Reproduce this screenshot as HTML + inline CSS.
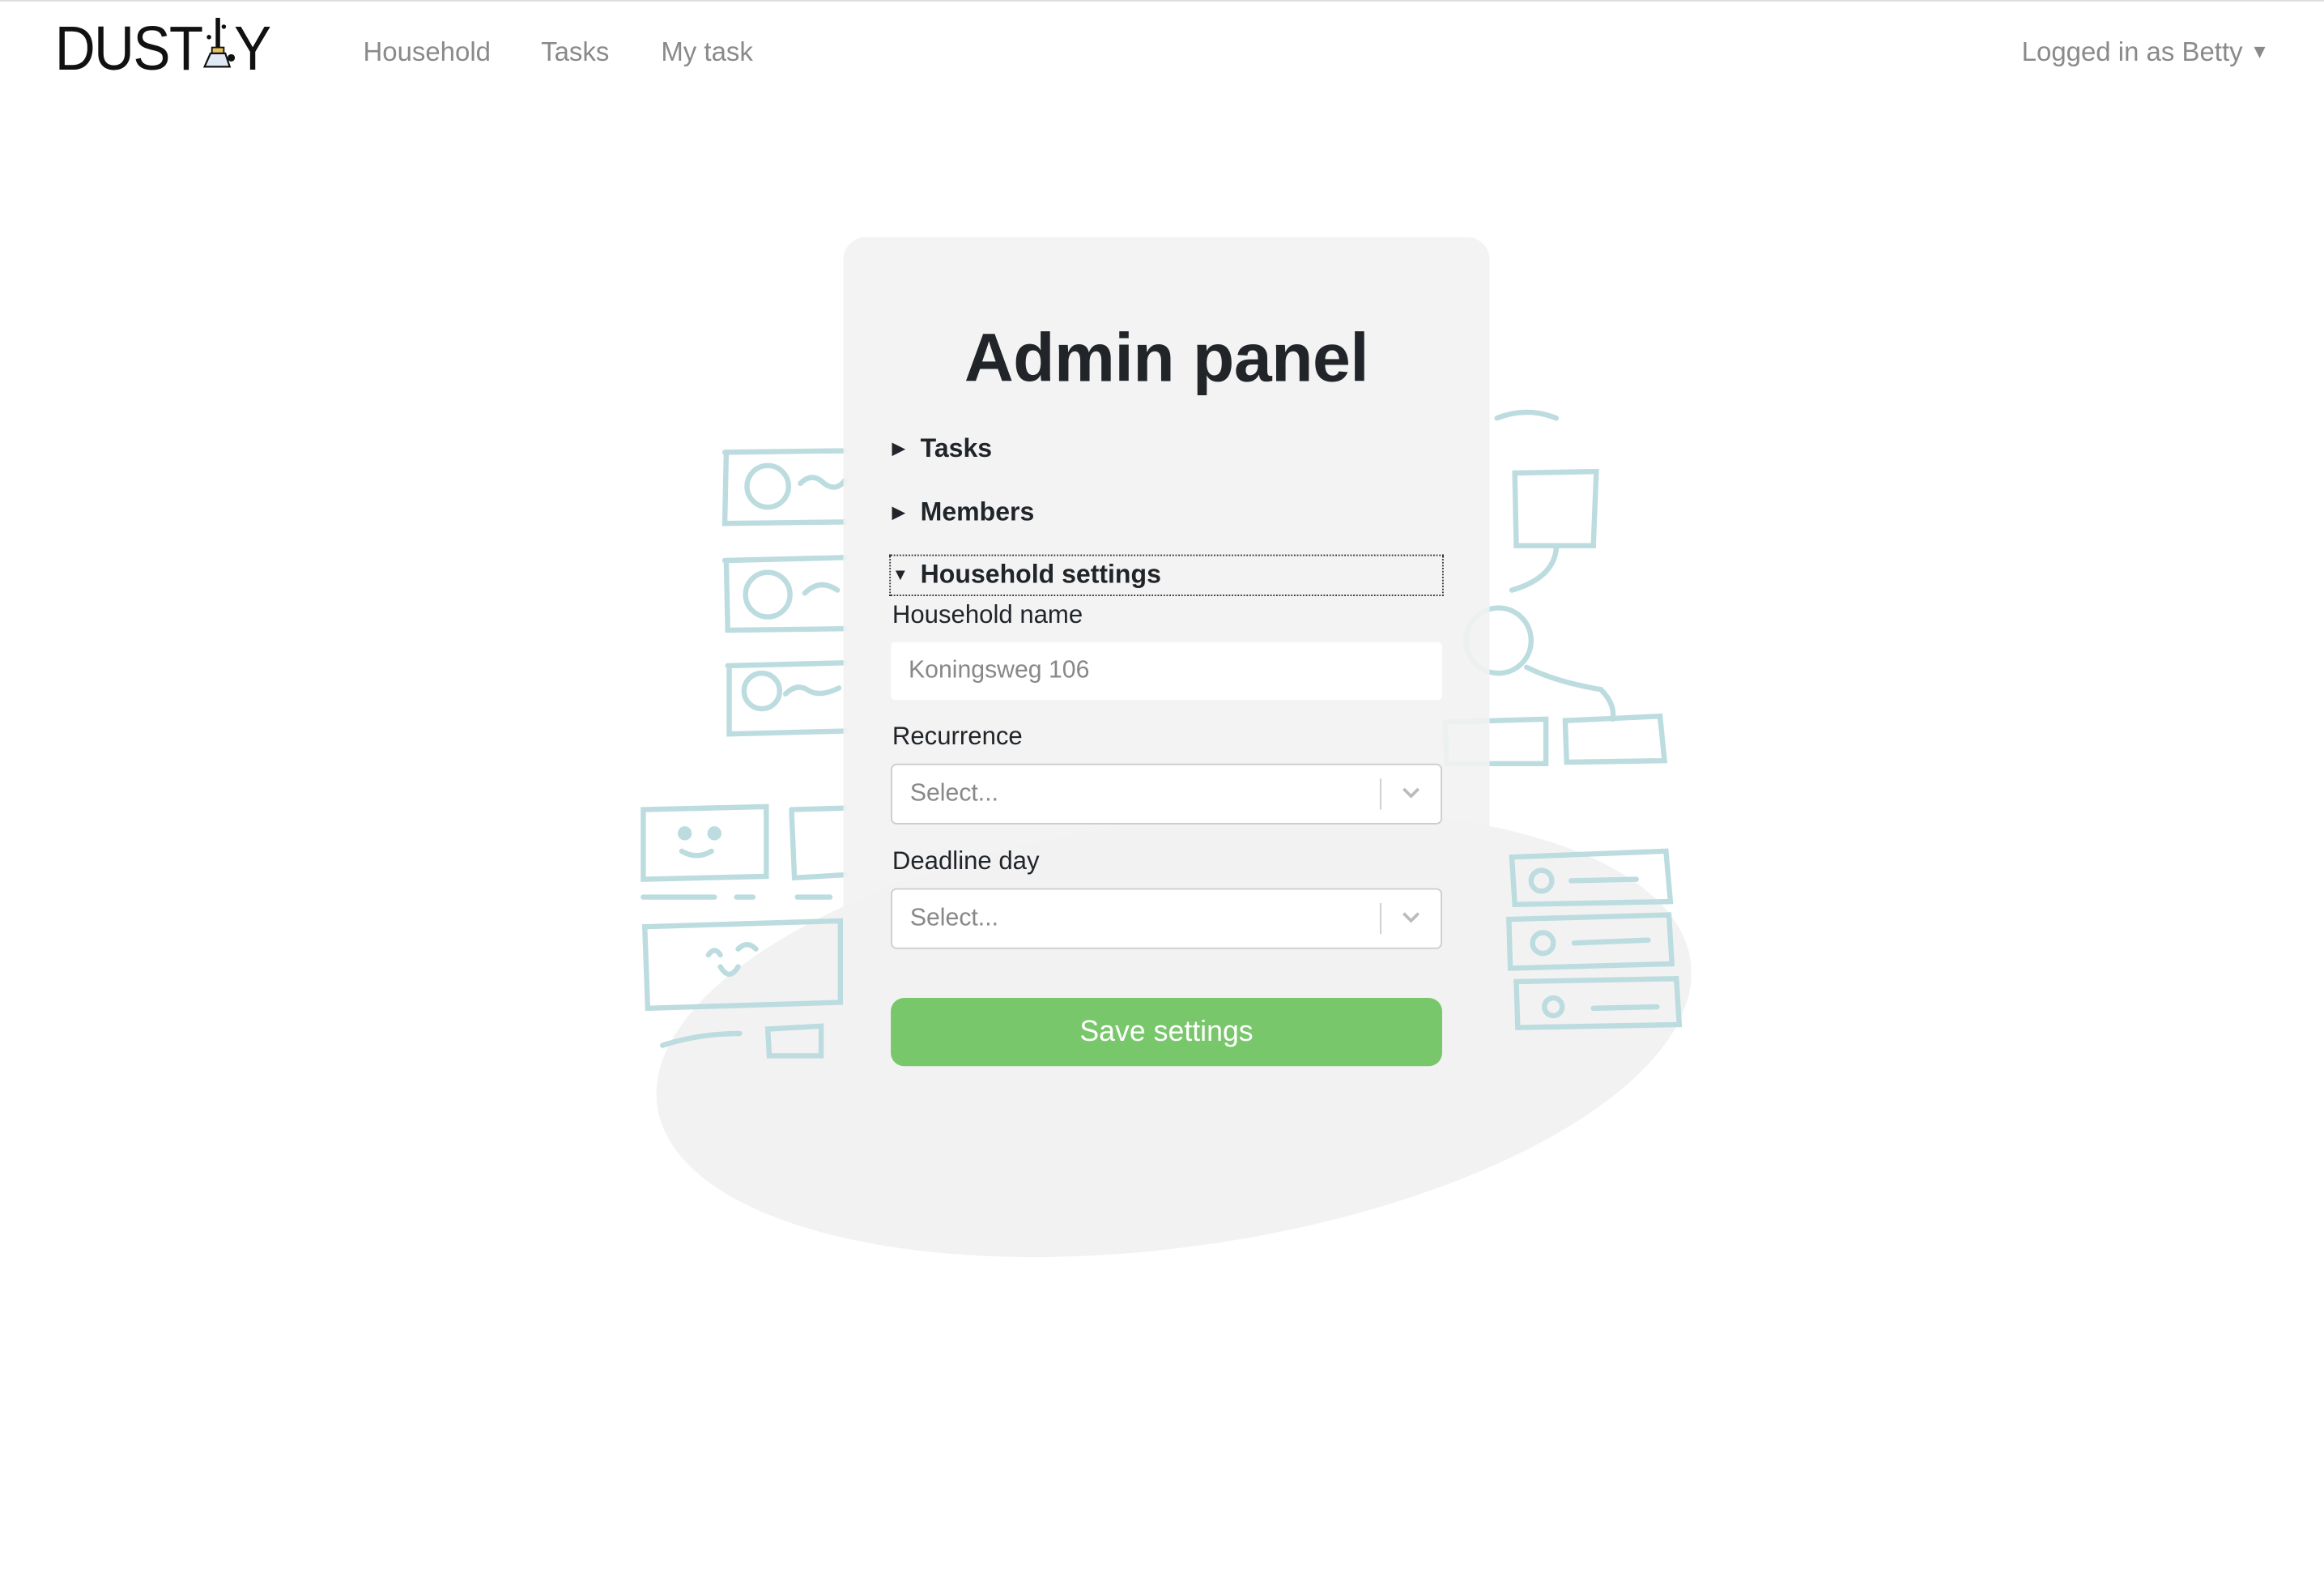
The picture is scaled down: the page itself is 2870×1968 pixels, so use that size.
<!DOCTYPE html>
<html><head><meta charset="utf-8"><style>
html,body{margin:0;padding:0;background:#fff;overflow:hidden;width:2870px;height:1968px}
#w{position:absolute;left:0;top:0;width:1568px;height:1075px;transform:scale(1.8304,1.8307);transform-origin:0 0;font-family:"Liberation Sans",sans-serif}
.topline{position:absolute;left:0;top:0;width:1568px;height:1px;background:#ddd}
.logo{position:absolute;left:37px;top:9px;font-size:42px;color:#111;letter-spacing:-1px;transform:scaleX(0.9);transform-origin:0 0}
.nav{position:absolute;top:25px;font-size:18px;color:#8a8a8a;font-weight:300}
.card{position:absolute;left:569px;top:160px;width:436px;height:620px;background:rgba(242,242,242,0.9);border-radius:15px}
.abs{position:absolute}
h1{position:absolute;left:569px;width:436px;top:214px;margin:0;text-align:center;font-size:46px;font-weight:900;color:#212529;letter-spacing:-0.3px}
.sum{position:absolute;left:602px;font-size:17.5px;font-weight:bold;color:#212529}
.sum span{display:inline-block;width:19px;font-size:11px;vertical-align:2px}
.lbl{position:absolute;left:602px;font-size:17px;color:#212529}
.inp{position:absolute;left:601px;width:372px;height:39px;background:#fff;border-radius:3px}
.sel{position:absolute;left:601px;width:370px;height:39px;background:#fff;border:1px solid #ccc;border-radius:4px}
.ph{position:absolute;left:12px;top:10px;font-size:16.5px;color:#888}
.sep{position:absolute;left:329px;top:9px;width:1px;height:21px;background:#ccc}
.btn{position:absolute;left:601px;top:673px;width:372px;height:46px;background:#78c76a;border-radius:9px;color:#fff;font-size:19.5px;text-align:center;line-height:47px}
</style></head><body><div id="w">
<div class="topline"></div>
<svg class="abs" style="left:0;top:0" width="1568" height="1075">
<ellipse cx="792" cy="697" rx="352" ry="144" fill="#f2f2f2" transform="rotate(-8 792 697)"/>
<g fill="none" stroke="#bcdcdf" stroke-width="3.5" stroke-linecap="round">
<path d="M489 305 L570 304 M490 305 L489 353 L570 352"/>
<circle cx="518" cy="328" r="14"/><path d="M540 326 q8-8 16 0 q8 6 14-2"/>
<path d="M489 378 L570 376 M490 378 L491 425 L570 424"/>
<circle cx="518" cy="401" r="15"/><path d="M543 400 q10-10 22-2"/>
<path d="M491 449 L570 447 M492 449 L492 495 L570 493"/>
<circle cx="514" cy="466" r="12"/><path d="M530 468 q8-8 16-2 q8 4 20-2"/>
<path d="M434 546 L517 544 L517 591 L434 593 Z"/><circle cx="462" cy="562" r="3" fill="#bcdcdf"/><circle cx="482" cy="562" r="3" fill="#bcdcdf"/><path d="M460 574 q10 6 20 0"/>
<path d="M434 605 L482 605 M497 605 L508 605 M538 605 L560 605"/>
<path d="M534 546 L570 545 M534 546 L536 592 L570 590"/>
<path d="M435 625 L567 621 L567 676 L437 680 Z"/><path d="M478 644 q4-6 8 0 M498 640 q6-6 12 0 M486 652 q6 10 12 0"/>
<path d="M447 705 q25-8 52-8 M518 694 L554 692 L554 712 L519 712 Z"/>
<path d="M1022 319 L1077 318 L1075 368 L1023 368 Z"/><path d="M1050 370 q-2 20 -30 28"/>
<circle cx="1011" cy="432" r="22"/><path d="M1030 450 q20 10 50 15 q10 10 8 20"/>
<path d="M1010 282 q20-8 40 0"/>
<path d="M975 487 L1043 485 L1043 515 L976 515 Z M1056 486 L1120 483 L1123 513 L1057 514 Z"/>
<path d="M1020 578 L1124 574 L1127 608 L1022 610 Z"/><circle cx="1040" cy="594" r="7"/><path d="M1060 594 L1104 593"/>
<path d="M1018 620 L1126 617 L1128 650 L1019 653 Z"/><circle cx="1041" cy="636" r="7"/><path d="M1062 636 L1112 634"/>
<path d="M1023 662 L1131 660 L1133 691 L1024 693 Z"/><circle cx="1048" cy="679" r="6"/><path d="M1075 680 L1118 679"/>
</g>
</svg>
<div class="logo">DUST<span style="display:inline-block;width:24px"></span>Y</div>
<svg class="abs" style="left:135px;top:10px" width="28" height="36"><path d="M12 2 L12 26" stroke="#111" stroke-width="3"/><rect x="8" y="22" width="8" height="4" fill="#e8c25a" stroke="#111" stroke-width="1"/><path d="M7 26 L17 26 L20 35 L3 35 Z" fill="#dfe8f3" stroke="#111" stroke-width="1.2"/><circle cx="21" cy="29" r="2.5" fill="#111"/><circle cx="6" cy="15" r="1.5" fill="#111"/><circle cx="16" cy="8" r="1.5" fill="#111"/></svg>
<div class="nav" style="left:245px">Household</div>
<div class="nav" style="left:365px">Tasks</div>
<div class="nav" style="left:446px">My task</div>
<div class="nav" style="left:1364px">Logged in as Betty <span style="font-size:13px;vertical-align:2px">&#9660;</span></div>
<div class="card"></div>
<h1>Admin panel</h1>
<div class="sum" style="top:292px"><span>&#9654;</span>Tasks</div>
<div class="sum" style="top:335px"><span>&#9654;</span>Members</div>
<div class="abs" style="left:600px;top:374px;width:372px;height:26px;border:1px dotted #333"></div>
<div class="sum" style="top:377px"><span>&#9660;</span>Household settings</div>
<div class="lbl" style="top:405px">Household name</div>
<div class="inp" style="top:433px"><div class="ph">Koningsweg 106</div></div>
<div class="lbl" style="top:487px">Recurrence</div>
<div class="sel" style="top:515px"><div class="ph">Select...</div><div class="sep"></div><svg class="abs" style="left:343px;top:14px" width="14" height="10"><path d="M2 2 L7 7 L12 2" fill="none" stroke="#bbb" stroke-width="2"/></svg></div>
<div class="lbl" style="top:571px">Deadline day</div>
<div class="sel" style="top:599px"><div class="ph">Select...</div><div class="sep"></div><svg class="abs" style="left:343px;top:14px" width="14" height="10"><path d="M2 2 L7 7 L12 2" fill="none" stroke="#bbb" stroke-width="2"/></svg></div>
<div class="btn">Save settings</div>
</div></body></html>
